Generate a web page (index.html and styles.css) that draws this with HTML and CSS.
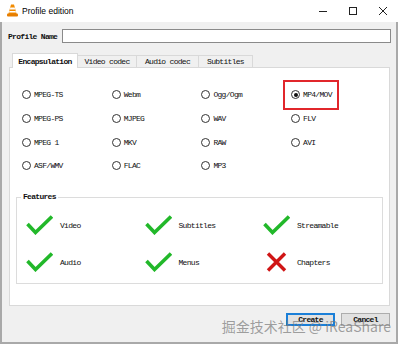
FILE: index.html
```html
<!DOCTYPE html>
<html lang="en">
<head>
  <meta charset="UTF-8">
  <title>Profile edition</title>
  <link rel="stylesheet" href="styles.css">
</head>
<body>
  <div class="window">
    <div class="titlebar">
      <svg class="app-icon" width="11" height="13" viewBox="0 0 11 13">
        <path d="M4 0.5 L7 0.5 L9.6 10 L1.4 10 Z" fill="#f28b00"/>
        <path d="M3.3 3.6 L7.7 3.6 L8.2 5.4 L2.8 5.4 Z" fill="#fff"/>
        <path d="M2.4 7 L8.6 7 L9 8.6 L2 8.6 Z" fill="#fff"/>
        <rect x="0" y="9.6" width="11" height="3" rx="1" fill="#e67e00"/>
      </svg>
      <span class="title">Profile edition</span>
      <div class="caption-buttons">
        <span class="caption-btn">
          <svg width="10" height="10" viewBox="0 0 10 10"><path d="M1 5.5 H9" stroke="#222" stroke-width="1"/></svg>
        </span>
        <span class="caption-btn">
          <svg width="10" height="10" viewBox="0 0 10 10"><rect x="1.5" y="1.5" width="7" height="7" fill="none" stroke="#222" stroke-width="1"/></svg>
        </span>
        <span class="caption-btn">
          <svg width="10" height="10" viewBox="0 0 10 10"><path d="M1 1 L9 9 M9 1 L1 9" stroke="#222" stroke-width="1"/></svg>
        </span>
      </div>
    </div>

    <div class="dialog">
      <div class="name-row">
        <label class="name-label">Profile Name</label>
        <input class="name-input" type="text">
      </div>

      <div class="tabs">
        <div class="tab tab-active">Encapsulation</div>
        <div class="tab tab-video">Video codec</div>
        <div class="tab tab-audio">Audio codec</div>
        <div class="tab tab-subs">Subtitles</div>
      </div>

      <div class="panel">
        <div class="radio-grid">
          <div class="option"><span class="radio"></span>MPEG-TS</div>
          <div class="option"><span class="radio"></span>Webm</div>
          <div class="option"><span class="radio"></span>Ogg/Ogm</div>
          <div class="option highlight"><span class="radio checked"></span>MP4/MOV</div>

          <div class="option"><span class="radio"></span>MPEG-PS</div>
          <div class="option"><span class="radio"></span>MJPEG</div>
          <div class="option"><span class="radio"></span>WAV</div>
          <div class="option"><span class="radio"></span>FLV</div>

          <div class="option"><span class="radio"></span>MPEG 1</div>
          <div class="option"><span class="radio"></span>MKV</div>
          <div class="option"><span class="radio"></span>RAW</div>
          <div class="option"><span class="radio"></span>AVI</div>

          <div class="option"><span class="radio"></span>ASF/WMV</div>
          <div class="option"><span class="radio"></span>FLAC</div>
          <div class="option"><span class="radio"></span>MP3</div>
        </div>

        <div class="group">
          <div class="group-title">Features</div>
          <div class="feature-grid">
            <div class="feature">
              <svg class="feature-icon" width="27" height="20" viewBox="0 0 27 20"><path d="M1.5 9 L9.5 17.5 L26 1.5" fill="none" stroke="#22b82a" stroke-width="3.6"/></svg>
              Video
            </div>
            <div class="feature">
              <svg class="feature-icon" width="27" height="20" viewBox="0 0 27 20"><path d="M1.5 9 L9.5 17.5 L26 1.5" fill="none" stroke="#22b82a" stroke-width="3.6"/></svg>
              Subtitles
            </div>
            <div class="feature">
              <svg class="feature-icon" width="27" height="20" viewBox="0 0 27 20"><path d="M1.5 9 L9.5 17.5 L26 1.5" fill="none" stroke="#22b82a" stroke-width="3.6"/></svg>
              Streamable
            </div>
            <div class="feature">
              <svg class="feature-icon" width="27" height="20" viewBox="0 0 27 20"><path d="M1.5 9 L9.5 17.5 L26 1.5" fill="none" stroke="#22b82a" stroke-width="3.6"/></svg>
              Audio
            </div>
            <div class="feature">
              <svg class="feature-icon" width="27" height="20" viewBox="0 0 27 20"><path d="M1.5 9 L9.5 17.5 L26 1.5" fill="none" stroke="#22b82a" stroke-width="3.6"/></svg>
              Menus
            </div>
            <div class="feature">
              <svg class="feature-icon" width="27" height="20" viewBox="0 0 27 20"><path d="M5 1.5 L22 18.5 M22 1.5 L5 18.5" fill="none" stroke="#d01515" stroke-width="3.4"/></svg>
              Chapters
            </div>
          </div>
        </div>
      </div>

      <div class="button-row">
        <button class="dlg-button focused">Create</button>
        <button class="dlg-button">Cancel</button>
      </div>
    </div>

    <div class="watermark">掘金技术社区 @ iReaShare</div>
  </div>
</body>
</html>
```

FILE: styles.css
```css
body {
  margin: 0;
  background-color: #ffffff;
}

.window {
  position: relative;
  width: 400px;
  height: 344px;
  overflow: hidden;
  font-family: "Liberation Mono", monospace;
  font-size: 8px;
  letter-spacing: -0.7px;
  color: #111;
}

/* title bar */
.titlebar {
  height: 22px;
  display: flex;
  align-items: center;
  background-color: #ffffff;
  padding-left: 7px;
}

.app-icon {
  display: block;
  margin-top: -1px;
}

.title {
  margin-left: 4px;
  font-family: "Liberation Sans", Arial, sans-serif;
  font-size: 8.5px;
  letter-spacing: 0;
  color: #000;
}

.caption-buttons {
  display: flex;
  margin-left: auto;
  margin-right: 2px;
}

.caption-btn {
  width: 30px;
  height: 22px;
  display: flex;
  align-items: center;
  justify-content: center;
}

/* dialog body */
.dialog {
  width: 394px;
  height: 320px;
  background-color: #f0f0f0;
  border-left: 2px solid #a9a9a9;
  border-right: 2px solid #a9a9a9;
  border-bottom: 2px solid #a9a9a9;
}

.name-row {
  display: flex;
  align-items: center;
  padding: 7px 0 0 6px;
}

.name-label {
  width: 54px;
  font-weight: bold;
}

.name-input {
  box-sizing: border-box;
  width: 329px;
  height: 14px;
  margin: 0;
  padding: 0;
  border: 1px solid #8a8a8a;
  background-color: #ffffff;
}

/* tabs */
.tabs {
  display: flex;
  align-items: flex-end;
  height: 15px;
  margin: 10px 0 0 10px;
  position: relative;
  z-index: 1;
}

.tab {
  box-sizing: border-box;
  height: 12px;
  display: flex;
  align-items: center;
  justify-content: center;
  border: 1px solid #d9d9d9;
  border-bottom: none;
  background-color: #f0f0f0;
  margin-bottom: 1px;
}

.tab-active {
  width: 66px;
  height: 15px;
  margin-bottom: 0;
  background-color: #ffffff;
  font-weight: bold;
}

.tab-video {
  width: 59px;
  border-left: none;
}

.tab-audio {
  width: 62px;
  border-left: none;
}

.tab-subs {
  width: 54px;
  border-left: none;
}

/* tab panel */
.panel {
  box-sizing: border-box;
  height: 239px;
  margin: -1px 6px 0 7px;
  background-color: #ffffff;
  border: 1px solid #d9d9d9;
}

.radio-grid {
  display: grid;
  grid-template-columns: repeat(4, 89.7px);
  grid-auto-rows: 23.7px;
  align-items: center;
  justify-items: start;
  padding: 15px 0 0 12px;
}

.option {
  position: relative;
  display: flex;
  align-items: center;
  height: 10px;
}

.radio {
  box-sizing: border-box;
  width: 9px;
  height: 9px;
  border: 1px solid #333;
  border-radius: 50%;
  background-color: #ffffff;
  margin-right: 3px;
  display: flex;
  align-items: center;
  justify-content: center;
}

.radio.checked::after {
  content: "";
  width: 4px;
  height: 4px;
  border-radius: 50%;
  background-color: #111;
}

.highlight::after {
  content: "";
  position: absolute;
  top: -10px;
  bottom: -10px;
  left: -8px;
  right: -7px;
  border: 2px solid #e1262b;
}

/* features group */
.group {
  margin: 19px 6px 0;
  border: 1px solid #dcdcdc;
  height: 85px;
}

.group-title {
  width: fit-content;
  margin: -6px 0 0 4px;
  padding: 0 2px;
  line-height: 10px;
  background-color: #ffffff;
  font-weight: bold;
}

.feature-grid {
  display: grid;
  grid-template-columns: repeat(3, 118.5px);
  grid-auto-rows: 37px;
  align-items: center;
  padding: 5px 0 0 9px;
}

.feature {
  display: flex;
  align-items: center;
  gap: 7px;
}

.feature-icon {
  display: block;
}

/* buttons */
.button-row {
  display: flex;
  justify-content: flex-end;
  gap: 6px;
  padding: 7px 6px 0 0;
}

.dlg-button {
  box-sizing: border-box;
  width: 49px;
  height: 13px;
  padding: 0;
  margin: 0;
  border: 1px solid #adadad;
  background-color: #e1e1e1;
  font-family: "Liberation Mono", monospace;
  font-size: 8px;
  letter-spacing: -0.7px;
  font-weight: bold;
  color: #111;
}

.focused {
  border: 2px solid #1a7fd8;
}

.watermark {
  position: absolute;
  right: 9px;
  bottom: 8px;
  font-family: "Noto Sans CJK SC", "Noto Sans", sans-serif;
  font-size: 14px;
  letter-spacing: 0;
  color: rgba(120, 120, 120, 0.7);
  white-space: nowrap;
}
```
